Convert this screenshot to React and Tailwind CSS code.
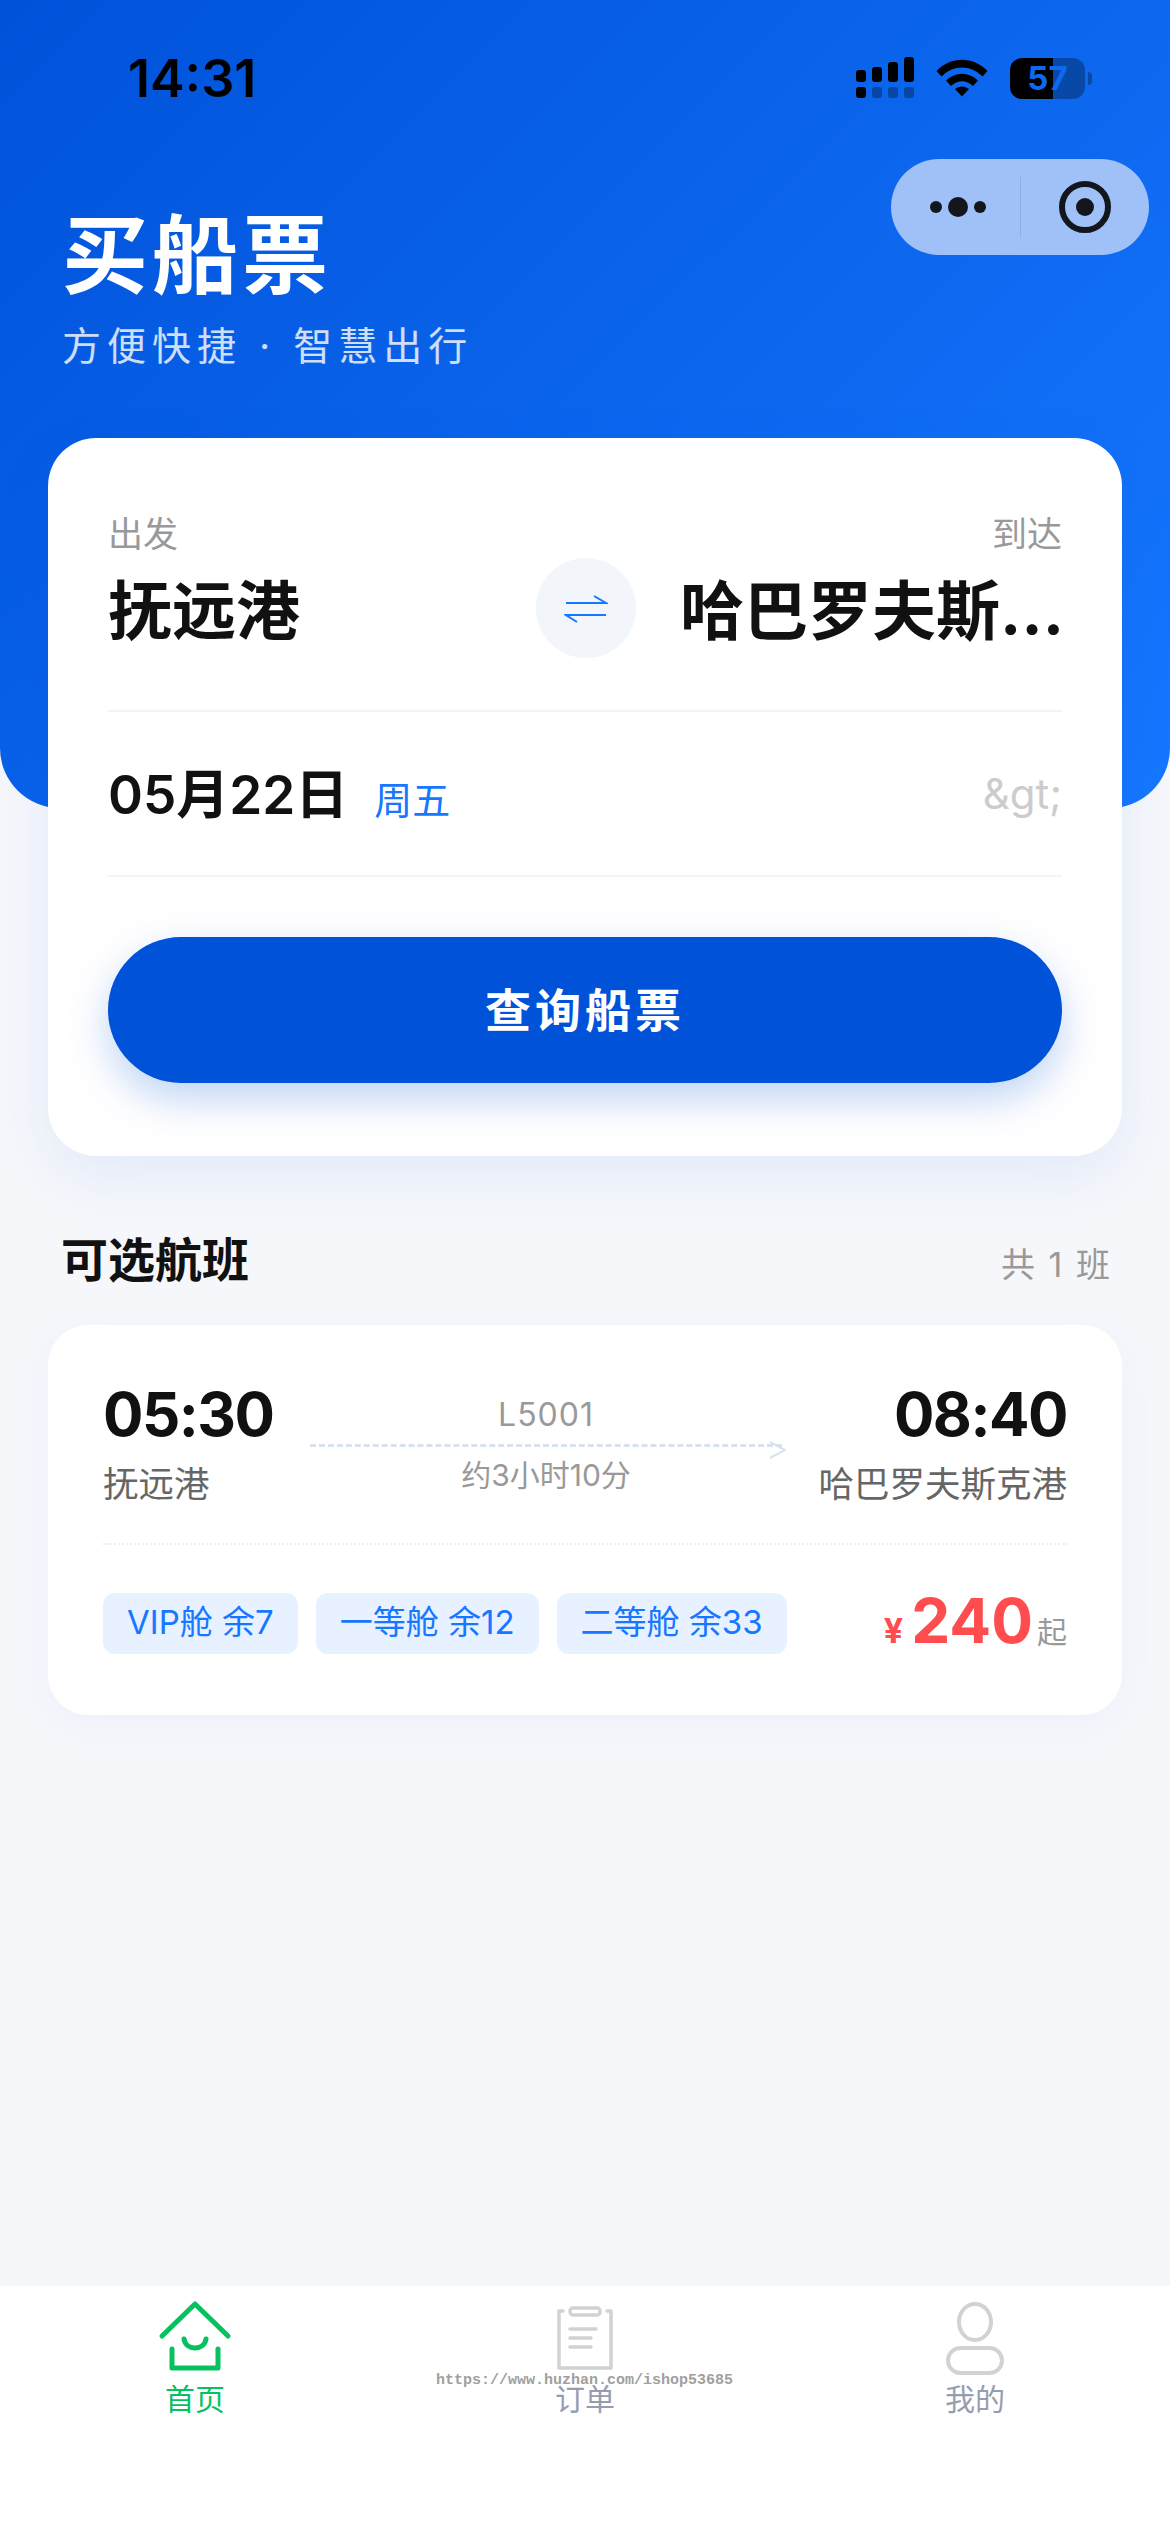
import React from 'react';

const font = "font-['Inter','Noto_Sans_CJK_SC',sans-serif]";

const SignalIcon = () => (
    <svg width="58" height="44" viewBox="0 0 58 44">
        <rect x="0" y="14" width="10" height="12" rx="3" fill="#000" />
        <rect x="16" y="11" width="10" height="15" rx="3" fill="#000" />
        <rect x="32" y="6" width="10" height="20" rx="3" fill="#000" />
        <rect x="48" y="1" width="10" height="25" rx="3" fill="#000" />
        <rect x="0" y="31" width="10" height="11" rx="3" fill="#000" />
        <rect x="16" y="31" width="10" height="11" rx="3" fill="#000" fillOpacity="0.3" />
        <rect x="32" y="31" width="10" height="11" rx="3" fill="#000" fillOpacity="0.3" />
        <rect x="48" y="31" width="10" height="11" rx="3" fill="#000" fillOpacity="0.3" />
    </svg>
);

const WifiIcon = () => (
    <svg width="52" height="38" viewBox="0 0 52 38">
        <path d="M0.5 12 C15 -3 37 -3 51.5 12 L46.5 17.5 C34.5 5.5 17.5 5.5 5.5 17.5 Z" fill="#000" />
        <path d="M10 21.5 C19.5 12.5 32.5 12.5 42 21.5 L37 27 C30 20.5 22 20.5 15 27 Z" fill="#000" />
        <path d="M19 30 C23 26.5 29 26.5 33 30 L26 37.5 Z" fill="#000" />
    </svg>
);

const Battery = () => (
    <div className="flex items-center">
        <div className="relative w-[75px] h-[41px] rounded-[12px] overflow-hidden flex">
            <div className="w-[43px] bg-black"></div>
            <div className="flex-1 bg-black/30"></div>
            <span className="absolute inset-0 flex items-center justify-center text-[33px] font-bold leading-none text-[#0d6af0]">57</span>
        </div>
        <div className="ml-[3px] w-[4px] h-[13px] rounded-r-full bg-black/30"></div>
    </div>
);

const HomeIcon = () => (
    <svg width="80" height="80" viewBox="0 0 80 80" fill="none" stroke="#07c160" strokeWidth="5" strokeLinecap="round" strokeLinejoin="round">
        <path d="M7 38 L40 6 L73 38" />
        <path d="M17 51 V70 H63 V51" />
        <path d="M29 41 C31 53 49 53 51 41" />
    </svg>
);

const OrderIcon = () => (
    <svg width="80" height="80" viewBox="0 0 80 80" fill="none" stroke="#d2d2d2" strokeWidth="3.5" strokeLinecap="round" strokeLinejoin="round">
        <path d="M18 13 H14 V70 H66 V13 H62" />
        <rect x="25" y="10" width="30" height="7" rx="3" />
        <path d="M25 31 H51" />
        <path d="M25 40 H46" />
        <path d="M25 49 H46" />
    </svg>
);

const UserIcon = () => (
    <svg width="80" height="80" viewBox="0 0 80 80" fill="none" stroke="#d2d2d2" strokeWidth="4">
        <ellipse cx="40" cy="24" rx="16" ry="18" />
        <rect x="13" y="50" width="54" height="25" rx="12.5" />
    </svg>
);

const SwapIcon = () => (
    <svg width="44" height="30" viewBox="0 0 44 30" fill="none" stroke="#1677ff" strokeWidth="2">
        <path d="M2 10 H42 L30 3" />
        <path d="M42 22 H2 L13 29" />
    </svg>
);

const Tab = ({ icon, label, active }) => (
    <div className="flex-1 flex flex-col items-center">
        {icon}
        <span className={active ? 'mt-[1px] text-[30px] leading-[40px] text-[#07c160]' : 'mt-[1px] text-[30px] leading-[40px] text-[#959eb0]'}>{label}</span>
    </div>
);

const Tag = ({ text }) => (
    <div className="h-[61px] px-[24px] flex items-center rounded-[12px] bg-[#e8f1ff] text-[33px] text-[#1677ff] whitespace-nowrap">{text}</div>
);

export default function App() {
    return (
        <div className={`${font} relative w-[1170px] h-[2532px] overflow-hidden flex flex-col bg-[#f5f7fb]`}>
            {/* header */}
            <div className="h-[808px] shrink-0 rounded-b-[60px] bg-[linear-gradient(135deg,#0052d9,#1677ff)] px-[62px]">
                <div className="flex items-center justify-between h-[156px]">
                    <span className="ml-[66px] mt-[2px] text-[52px] font-semibold text-black">14:31</span>
                    <div className="flex items-center gap-[22px] mr-[16px]">
                        <SignalIcon />
                        <WifiIcon />
                        <Battery />
                    </div>
                </div>
                <h1 className="text-[86px] leading-[100px] font-bold tracking-[4px] text-white mt-[50px]">买船票</h1>
                <p className="text-[39px] leading-[56px] tracking-[6px] text-white/80 mt-[12px]">方便快捷 · 智慧出行</p>
            </div>

            {/* capsule */}
            <div className="absolute left-[891px] top-[159px] w-[258px] h-[96px] rounded-[48px] bg-[#a0c1f8] flex items-center">
                <div className="w-[129px] flex items-center justify-center gap-[6px] pl-[4px]">
                    <span className="w-[12px] h-[12px] rounded-full bg-[#13161c]"></span>
                    <span className="w-[20px] h-[20px] rounded-full bg-[#13161c]"></span>
                    <span className="w-[12px] h-[12px] rounded-full bg-[#13161c]"></span>
                </div>
                <div className="w-px h-[60px] bg-black/10"></div>
                <div className="flex-1 flex items-center justify-center">
                    <div className="w-[52px] h-[52px] rounded-full border-[6px] border-[#13161c] flex items-center justify-center">
                        <span className="w-[18px] h-[18px] rounded-full bg-[#13161c]"></span>
                    </div>
                </div>
            </div>

            {/* search card */}
            <div className="relative mx-[48px] -mt-[370px] h-[718px] shrink-0 rounded-[48px] bg-white px-[60px] pt-[74px] shadow-[0_20px_60px_rgba(0,82,217,0.08)]">
                <div className="flex justify-between text-[35px] leading-[44px] text-[#999999]">
                    <span>出发</span>
                    <span>到达</span>
                </div>
                <div className="flex items-center h-[100px] mt-[2px]">
                    <div className="w-[428px] pt-[6px] text-[64px] font-bold text-[#111111]">抚远港</div>
                    <div className="w-[100px] h-[100px] rounded-full bg-[#f2f5fa] flex items-center justify-center">
                        <SwapIcon />
                    </div>
                    <div className="ml-[44px] w-[382px] pt-[6px] whitespace-nowrap text-[64px] font-bold text-[#111111]">哈巴罗夫斯…</div>
                </div>
                <div className="mt-[52px] h-[167px] flex items-center justify-between border-y-2 border-[#f3f4f6]">
                    <div className="flex items-baseline pt-[4px]">
                        <span className="text-[53px] font-semibold text-[#111111]">05月22日</span>
                        <span className="ml-[26px] text-[38px] text-[#1677ff]">周五</span>
                    </div>
                    <span className="text-[42px] text-[#cccccc]">&amp;gt;</span>
                </div>
                <div className="mt-[60px] h-[146px] rounded-full bg-[#0052d9] flex items-center justify-center text-[46px] font-semibold tracking-[4px] text-white shadow-[0_16px_40px_rgba(0,82,217,0.25)]">
                    查询船票
                </div>
            </div>

            {/* section title */}
            <div className="flex items-center justify-between h-[64px] mt-[72px] mb-[33px] pl-[61px] pr-[58px]">
                <span className="text-[47px] font-bold text-[#111111]">可选航班</span>
                <span className="pt-[8px] text-[34px] tracking-[2px] text-[#999999]">共 1 班</span>
            </div>

            {/* flight card */}
            <div className="mx-[48px] h-[390px] shrink-0 rounded-[40px] bg-white px-[55px] pt-[57px] shadow-[0_10px_40px_rgba(0,82,217,0.04)]">
                <div className="flex pb-[34px] border-b-2 border-dotted border-[#eeeeee]">
                    <div className="shrink-0">
                        <div className="text-[60px] leading-[64px] tracking-[-1.5px] font-bold text-[#111111]">05:30</div>
                        <div className="mt-[15px] text-[35.5px] leading-[48px] text-[#666666]">抚远港</div>
                    </div>
                    <div className="flex-1 mx-[36px] flex flex-col items-center pt-[11px]">
                        <div className="text-[32px] leading-[44px] tracking-[1px] text-[#999999]">L5001</div>
                        <div className="relative w-full mt-[7px] border-t-[3px] border-dashed border-[#d8e2ee]">
                            <svg className="absolute -right-[5px] -top-[6px]" width="18" height="18" viewBox="0 0 18 18" fill="none" stroke="#d8e2ee" strokeWidth="2">
                                <path d="M1 1 L16 9 L1 17" />
                            </svg>
                        </div>
                        <div className="mt-[8px] text-[30px] leading-[40px] text-[#999999]">约3小时10分</div>
                    </div>
                    <div className="shrink-0 text-right">
                        <div className="text-[60px] leading-[64px] tracking-[-1.5px] font-bold text-[#111111]">08:40</div>
                        <div className="mt-[15px] text-[35.5px] leading-[48px] text-[#666666]">哈巴罗夫斯克港</div>
                    </div>
                </div>
                <div className="mt-[40px] flex items-center justify-between">
                    <div className="flex gap-[18px]">
                        <Tag text="VIP舱 余7" />
                        <Tag text="一等舱 余12" />
                        <Tag text="二等舱 余33" />
                    </div>
                    <div className="flex items-baseline pb-[4px]">
                        <span className="text-[34px] font-bold text-[#ff4d4f]">¥</span>
                        <span className="ml-[8px] text-[62px] leading-[72px] font-bold text-[#ff4d4f]">240</span>
                        <span className="ml-[4px] text-[30px] text-[#999999]">起</span>
                    </div>
                </div>
            </div>

            {/* tab bar */}
            <div className="mt-auto h-[246px] shrink-0 bg-white flex pt-[12px]">
                <Tab icon={<HomeIcon />} label="首页" active />
                <Tab icon={<OrderIcon />} label="订单" />
                <Tab icon={<UserIcon />} label="我的" />
            </div>

            {/* watermark */}
            <div className="absolute left-[436px] top-[2371px] font-['Liberation_Mono',monospace] font-bold text-[15px] leading-[20px] text-[#a0a0a0]">
                https://www.huzhan.com/ishop53685
            </div>
        </div>
    );
}
